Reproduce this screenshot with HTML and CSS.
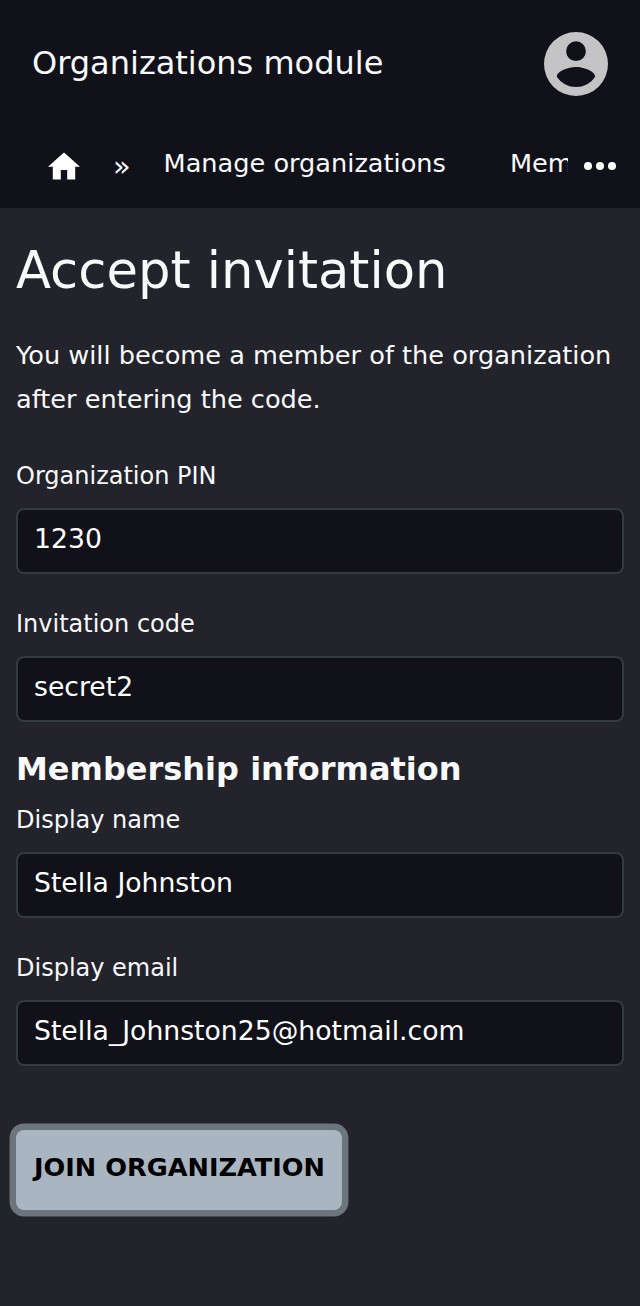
FILE: index.html
```html
<!DOCTYPE html>
<html lang="en">
<head>
<meta charset="utf-8">
<title>Accept invitation</title>
<link rel="stylesheet" href="styles.css">
</head>
<body>
<header class="header">
  <div class="topbar">
    <span class="brand">Organizations module</span>
    <svg class="avatar" viewBox="2 2 20 20"><path fill-rule="evenodd" d="M12 2a10 10 0 1 0 0 20 10 10 0 0 0 0-20zm0 2.900a3.100 3.100 0 1 1 0 6.200 3.100 3.100 0 0 1 0-6.200zm0 14.300a7.200 7.200 0 0 1-6-3.220c.03-1.990 4-3.080 6-3.080 1.990 0 5.970 1.090 6 3.080a7.200 7.200 0 0 1-6 3.220z"/></svg>
  </div>
  <nav class="breadcrumbs">
    <svg class="home" viewBox="2 3 20 17"><path d="M10 20v-6h4v6h5v-8h3L12 3 2 12h3v8z"/></svg>
    <span class="separator">»</span>
    <a class="crumb">Manage organizations</a>
    <a class="crumb clipped">Members</a>
    <svg class="more" viewBox="0 0 32 8"><circle cx="4" cy="4" r="4"/><circle cx="16" cy="4" r="4"/><circle cx="28" cy="4" r="4"/></svg>
  </nav>
</header>
<main class="content">
  <h1 class="title">Accept invitation</h1>
  <p class="intro">You will become a member of the organization after entering the code.</p>
  <form class="form">
    <label class="field"><span class="label">Organization PIN</span><input class="input" value="1230"></label>
    <label class="field"><span class="label">Invitation code</span><input class="input" value="secret2"></label>
    <h2 class="section">Membership information</h2>
    <label class="field"><span class="label">Display name</span><input class="input" value="Stella Johnston"></label>
    <label class="field"><span class="label">Display email</span><input class="input" value="Stella_Johnston25@hotmail.com"></label>
    <button class="submit" type="button">JOIN ORGANIZATION</button>
  </form>
</main>
</body>
</html>
```
FILE: styles.css
```css
* { box-sizing: border-box; }
body { margin: 0; min-height: 1306px; background: #23232b; color: #f8f9fa; font-family: "DejaVu Sans", sans-serif; }
.header { height: 208px; background: #11111a; }
.topbar { display: flex; height: 128px; padding: 0 32px; align-items: center; justify-content: space-between; }
.brand { padding-bottom: 2px; font-size: 32px; line-height: 48px; }
.avatar { width: 64px; height: 64px; fill: #c4c4c6; }
.breadcrumbs { display: flex; height: 80px; padding: 0 24px 0 48px; align-items: flex-start; font-size: 25.6px; line-height: 40px; white-space: nowrap; }
.home { width: 32px; height: 28px; margin-top: 24px; fill: #fff; flex: none; }
.separator { width: 18px; margin: 18px 32.600px 0 33px; font-size: 28.8px; flex: none; }
.crumb { margin-top: 15px; flex: none; }
.clipped { width: 58px; margin-left: auto; overflow: hidden; }
.more { width: 32px; height: 8px; margin: 34px 0 0 16px; fill: #fff; flex: none; }
.content { padding: 24px 16px 0; }
.title { margin: 0; font-size: 51.2px; font-weight: 400; line-height: 76px; }
.intro { margin: 25px 0 0; font-size: 25.6px; line-height: 44px; }
.form { display: flex; flex-direction: column; align-items: flex-start; margin-top: 37px; }
.field { width: 100%; height: 148px; }
.label { display: block; height: 50px; font-size: 24px; line-height: 36px; }
.input { display: block; width: 100%; height: 66px; padding: 0 16px 5px; border: 2px solid #343a40; border-radius: 8px; background: #11111a; color: #fff; font: 26.66px "DejaVu Sans", sans-serif; }
.section { margin: -5px 0 0; height: 53px; font-size: 32px; line-height: 40px; }
.submit { height: 80px; width: 326px; margin-top: 32px; padding: 0 0 6px 1px; border: 0; border-radius: 8px; background: #a9b5c1; box-shadow: 0 0 0 6.4px #6c757d; color: #000; font: bold 25.6px "DejaVu Sans", sans-serif; }
```
